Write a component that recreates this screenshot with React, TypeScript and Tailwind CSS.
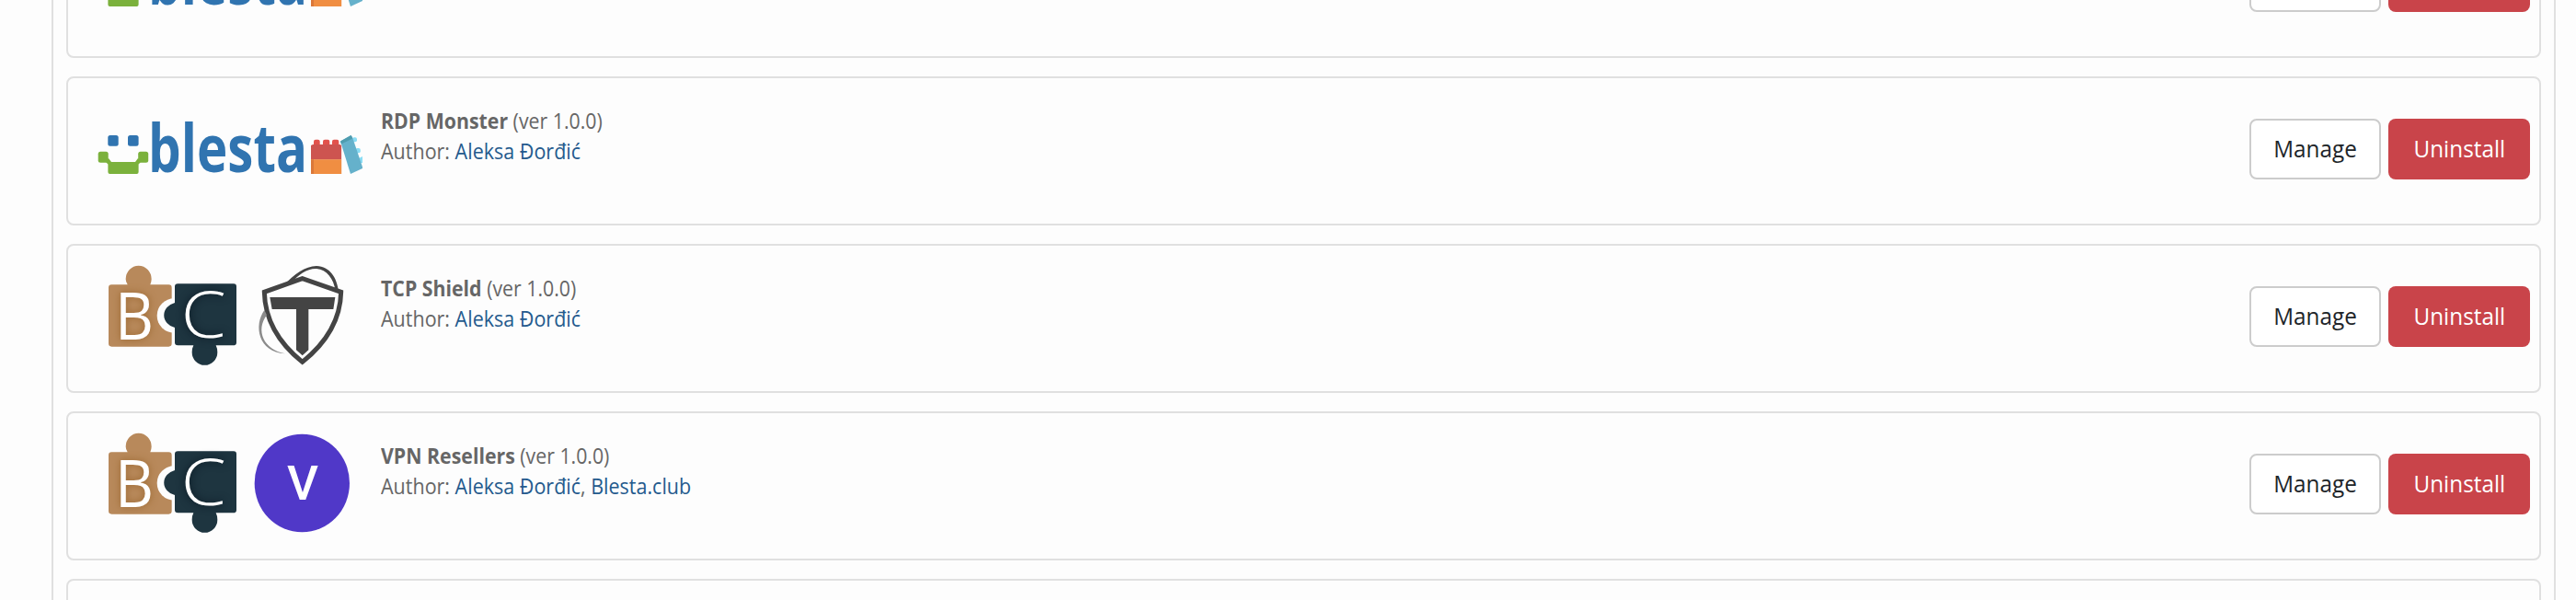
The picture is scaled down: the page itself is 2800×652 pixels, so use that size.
import type { ReactNode } from 'react';

type Author = { name: string };

type Module = {
  id: number;
  name: string;
  version: string;
  authors: Author[];
  logo: ReactNode;
};

function BlestaLogo() {
  return (
    <svg width="300" height="120" viewBox="0 0 300 120" className="shrink-0">
      <g fill="#3074b0">
        <rect x="17.3" y="43" width="11.4" height="11.7" rx="2.5" />
        <rect x="39" y="43" width="11.6" height="11.7" rx="2.5" />
      </g>
      <g fill="#7bb13c">
        <rect x="6.7" y="60.7" width="11" height="12" rx="2.5" />
        <rect x="50.2" y="60.7" width="11" height="12" rx="2.5" />
        <path d="M14 71l4-3 3 4h26l3-4 4 3-3.4 3.5v8.5q0 2-2 2h-29.200q-2 0-2-2v-8.500z" />
      </g>
      <text
        x="61"
        y="83.3"
        fontFamily="'Open Sans', sans-serif"
        fontSize="71"
        fontWeight="700"
        fill="#3074b0"
        textLength="173"
        lengthAdjust="spacingAndGlyphs"
      >
        blesta
      </text>
      <g fill="#e2524c">
        <rect x="241" y="47.7" width="6.7" height="8" rx="2" />
        <rect x="251" y="47.7" width="7.3" height="8" rx="2" />
        <rect x="261" y="47.7" width="7.3" height="8" rx="2" />
      </g>
      <path d="M238 54l2-1h29.500l1.600 1v15.500H238z" fill="#cd5450" />
      <path d="M238 69.300h33.200V85H238z" fill="#f08e42" />
      <path d="M238 69.300h3V85h-3z" fill="#db783a" />
      <g fill="#8adcf4">
        <rect x="283" y="45.300" width="5" height="5" rx="2" />
        <rect x="286.5" y="57" width="5.3" height="5.3" rx="2" />
        <path d="M289 68.500l5-2.500v7h-4z" />
      </g>
      <path d="M270 49.500l11.500-6.500 1.500 2L294 77.500v1.500L281 85z" fill="#65b1cb" />
      <path d="M270 49.500l11.500-6.500 1.800 3.500-12.300 6z" fill="#4f9caf" />
    </svg>
  );
}

function PuzzleMark() {
  return (
    <>
      <path
        d="M94 163h52q-6-9-6-18a42 44 0 0 1 84 0q0 9-4 18h60q10 0 10 10v182q0 10-10 10H94q-10 0-10-10V173q0-10 10-10z"
        fill="#b8895b"
      />
      <circle cx="298" cy="264" r="56" fill="#fdfdfd" />
      <path
        d="M310 160h182q9 0 9 9v183q0 9-9 9h-58q5 10 5 22a41 42 0 0 1-83 0q0-12 5-22h-51q-10 0-10-9v-49a48 42 0 0 1 0-81v-53q0-9 10-9z"
        fill="#1e3540"
      />
      <g fill="#fff" fontFamily="'Open Sans', sans-serif">
        <text
          x="105"
          y="341"
          fontSize="214"
          fontWeight="400"
          textLength="126"
          lengthAdjust="spacingAndGlyphs"
          style={{ textShadow: '0 0 9px #9a672f' }}
        >
          B
        </text>
        <text
          x="320"
          y="335"
          fontSize="208"
          fontWeight="300"
          textLength="147"
          lengthAdjust="spacingAndGlyphs"
          style={{ textShadow: '0 0 9px #08141f' }}
        >
          C
        </text>
      </g>
    </>
  );
}

function TcpShieldLogo() {
  return (
    <svg width="300" height="120" viewBox="30 93 900 360" className="shrink-0">
      <PuzzleMark />
      <path
        d="M716 143L592 187C594 282 645 358 716 415C787 358 840 282 842 187Z"
        fill="none"
        stroke="#444"
        strokeWidth="15"
      />
      <path
        d="M656 165C690 128 725 103 762 102C806 103 829 142 834 184L824 182C818 145 796 113 762 111C730 110 706 130 680 156Z"
        fill="#444"
      />
      <path
        d="M592 246C557 295 571 383 660 388C590 376 562 312 600 262Z"
        fill="#8b8b8b"
      />
      <path
        d="M610 204H823L817 243H736V376L716 394L696 376V243H617Z"
        fill="#444"
      />
    </svg>
  );
}

function VpnResellersLogo() {
  return (
    <svg width="300" height="120" viewBox="30 93 900 360" className="shrink-0">
      <PuzzleMark />
      <ellipse cx="715" cy="264" rx="155" ry="160" fill="#5038c8" />
      <text
        x="717"
        y="318"
        fontFamily="Roboto, sans-serif"
        fontSize="158"
        fontWeight="500"
        textAnchor="middle"
        fill="#fff"
      >
        V
      </text>
    </svg>
  );
}

const aleksa: Author = { name: 'Aleksa Đorđić' };

const modules: Module[] = [
  { id: 1, name: '', version: '', authors: [], logo: <BlestaLogo /> },
  {
    id: 2,
    name: 'RDP Monster',
    version: '1.0.0',
    authors: [aleksa],
    logo: <BlestaLogo />,
  },
  {
    id: 3,
    name: 'TCP Shield',
    version: '1.0.0',
    authors: [aleksa],
    logo: <TcpShieldLogo />,
  },
  {
    id: 4,
    name: 'VPN Resellers',
    version: '1.0.0',
    authors: [aleksa, { name: 'Blesta.club' }],
    logo: <VpnResellersLogo />,
  },
  { id: 5, name: '', version: '', authors: [], logo: null },
];

function ModuleCard({ module }: { module: Module }) {
  return (
    <li className="flex h-[162px] shrink-0 rounded-lg border-2 border-[#e0e0e0] pr-[10px] pl-[26px]">
      <div className="mt-[19px] w-[300px]">{module.logo}</div>
      <div className="mt-[30px] ml-[14px] grow text-[23px] leading-[33px] text-[#666]">
        {module.name ? (
          <>
            <p className="origin-left scale-x-[0.926]">
              <strong className="font-bold">{module.name}</strong> (ver{' '}
              {module.version})
            </p>
            <p className="origin-left scale-x-[0.935]">
              Author:{' '}
              {module.authors.map((author, i) => (
                <span key={author.name}>
                  {i > 0 ? ', ' : ''}
                  <a href="#" className="text-[#245a8d]">
                    {author.name}
                  </a>
                </span>
              ))}
            </p>
          </>
        ) : null}
      </div>
      <div className="mt-[44px] flex h-[66px] gap-2 text-[26px]">
        <button
          type="button"
          className="w-[143px] rounded-lg border-2 border-[#ccc] bg-white pb-[2px] text-[#212529]"
        >
          <span className="inline-block scale-x-[0.935]">Manage</span>
        </button>
        <button
          type="button"
          className="w-[154px] rounded-lg bg-[#c9444a] pb-[2px] text-white"
        >
          <span className="inline-block scale-x-[0.935]">Uninstall</span>
        </button>
      </div>
    </li>
  );
}

export default function App() {
  return (
    <div className="h-[652px] w-[2800px] overflow-hidden bg-[#fdfdfd] pr-[22px] pl-[56px] font-['Open_Sans','Noto_Sans',sans-serif]">
      <div className="h-full overflow-hidden border-x-2 border-[#e0e0e0] px-[14px]">
        <ul className="-mt-[99px] flex flex-col gap-5">
          {modules.map((m) => (
            <ModuleCard key={m.id} module={m} />
          ))}
        </ul>
      </div>
    </div>
  );
}
